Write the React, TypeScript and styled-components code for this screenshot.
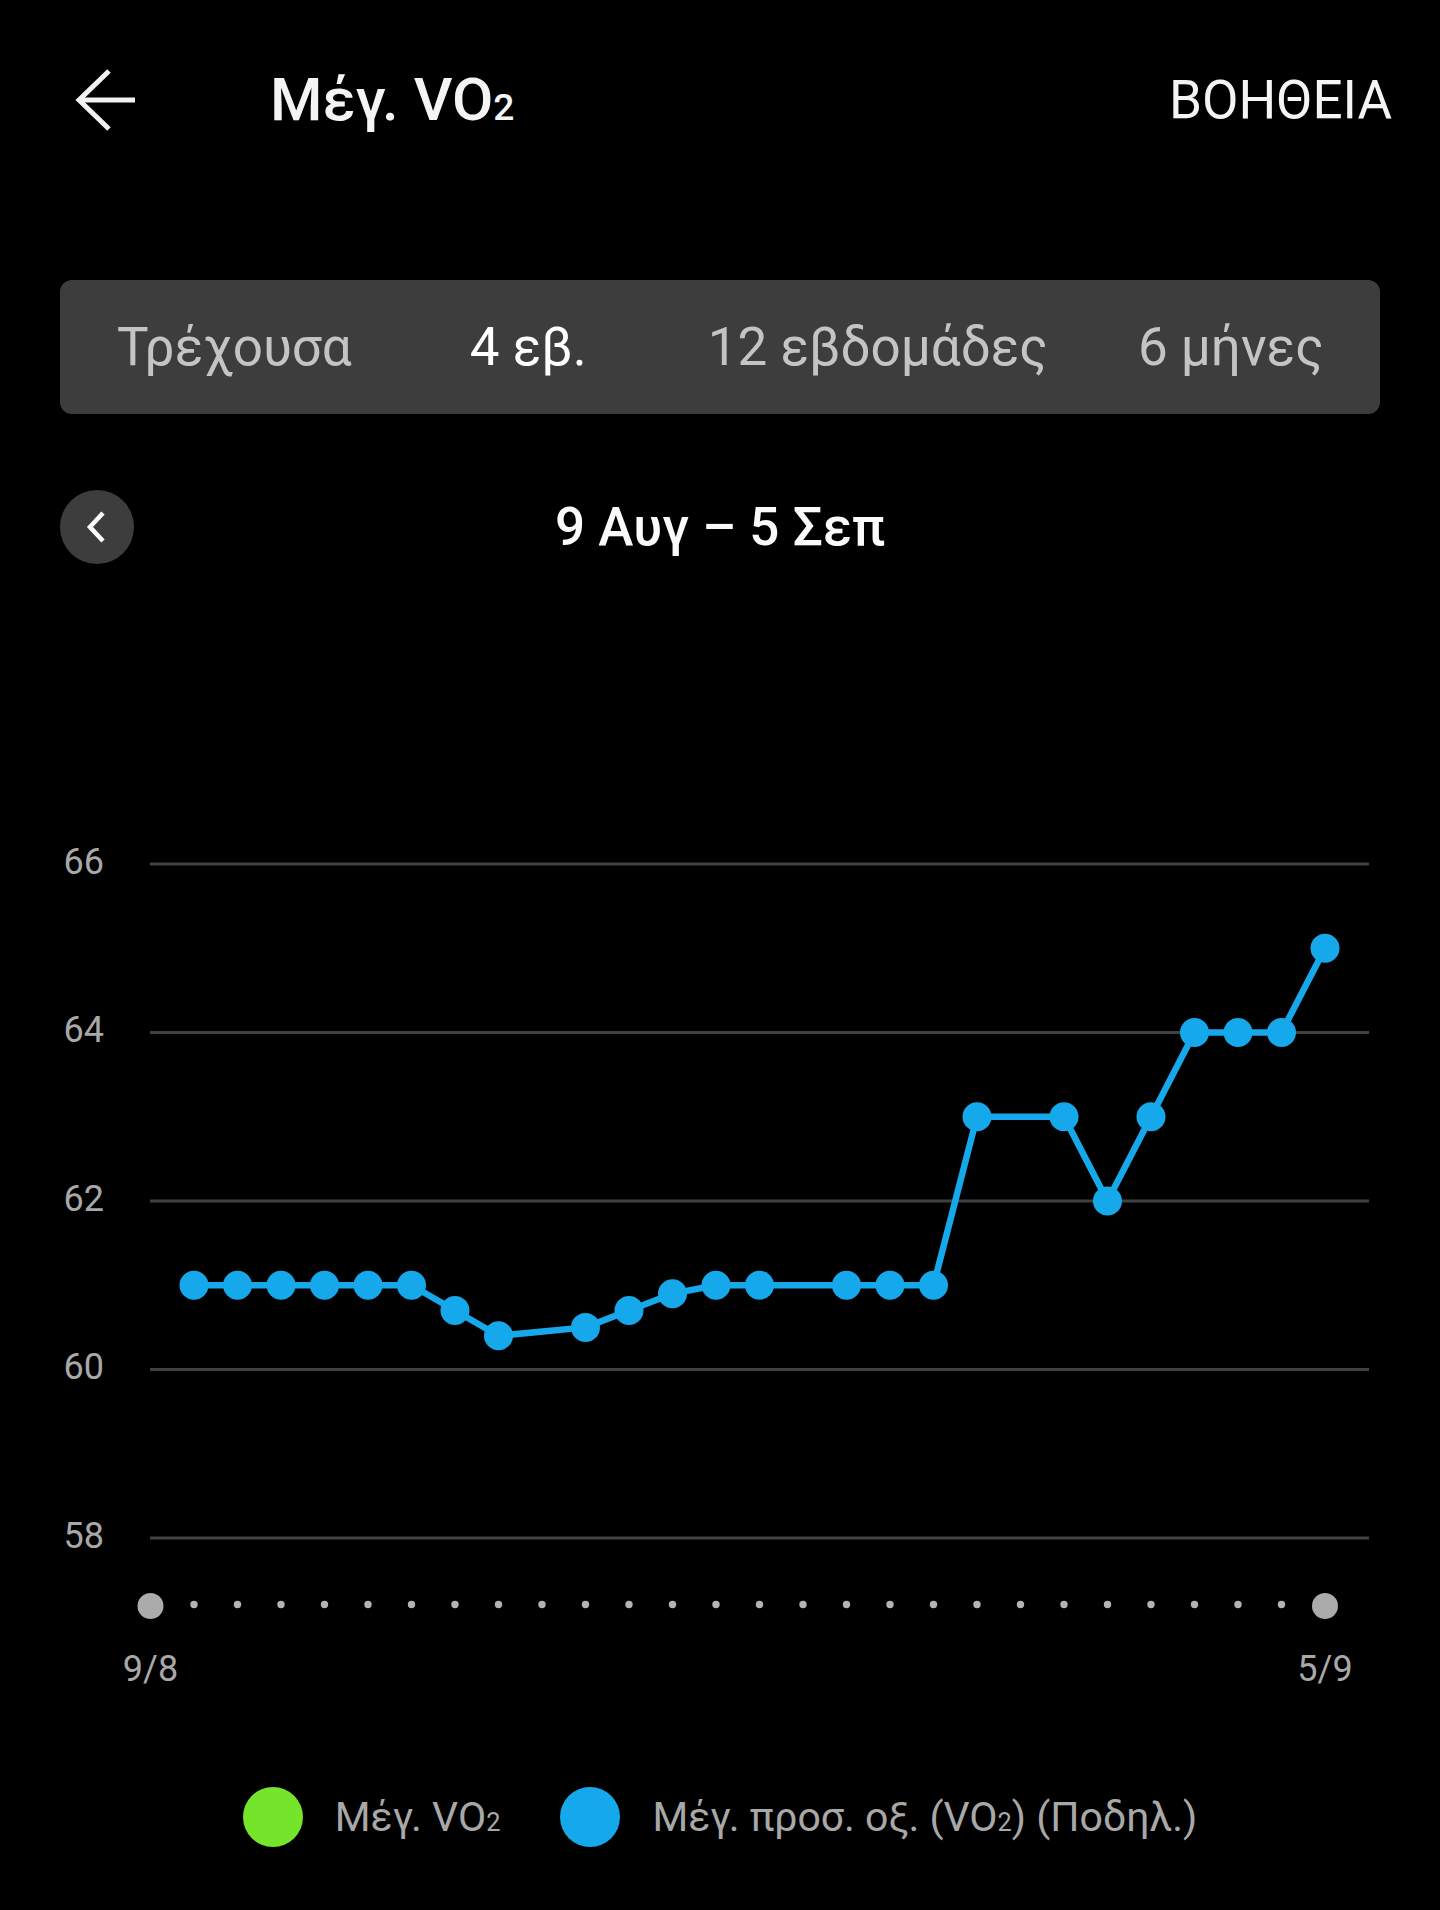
import React from 'react';
import styled, { createGlobalStyle } from 'styled-components';

const GlobalStyle = createGlobalStyle`
  html, body {
    margin: 0;
    padding: 0;
    background: #000;
  }
  body {
    font-family: Roboto, "Noto Sans", "Liberation Sans", sans-serif;
    -webkit-font-smoothing: antialiased;
  }
`;

// offset = space before the label inside the bar
const PERIODS = [
  { label: 'Τρέχουσα', active: false, offset: 57 },
  { label: '4 εβ.', active: true, offset: 118 },
  { label: '12 εβδομάδες', active: false, offset: 121 },
  { label: '6 μήνες', active: false, offset: 90 },
];

// one entry per day starting 9/8, null = no reading that day
const SERIES: (number | null)[] = [
  null, 61, 61, 61, 61, 61, 61, 60.7, 60.4, null, 60.5, 60.7, 60.9, 61,
  61, null, 61, 61, 61, 63, null, 63, 62, 63, 64, 64, 64, 65,
];

const GRID_VALUES = [66, 64, 62, 60, 58];

const X0 = 150.5;
const STEP = 43.5;
const Y_BASE = 569.5; // y of value 60
const UNIT = 84.25; // px per 1.0 of VO2
const BLUE = '#15a9eb';

const xAt = (i: number) => X0 + STEP * i;
const yAt = (v: number) => Y_BASE - (v - 60) * UNIT;

function BackArrow() {
  return (
    <svg width="65" height="64" viewBox="-3 -3 65 64" fill="none">
      <path d="M59 29H3" stroke="#f2f2f2" strokeWidth="5" />
      <path d="M33 0L3 29L33 58" stroke="#f2f2f2" strokeWidth="5" strokeLinejoin="miter" />
    </svg>
  );
}

function VO2() {
  return (
    <>
      VO<Sub>2</Sub>
    </>
  );
}

function Chart() {
  const points = SERIES
    .map((v, i) => (v === null ? null : { x: xAt(i), y: yAt(v) }))
    .filter((p): p is { x: number; y: number } => p !== null);
  const linePath = points.map((p, i) => `${i === 0 ? 'M' : 'L'}${p.x} ${p.y}`).join(' ');

  return (
    <ChartSvg width="1440" height="900" viewBox="0 0 1440 900">
      {GRID_VALUES.map((v) => (
        <g key={v}>
          <line x1="150" x2="1369" y1={yAt(v)} y2={yAt(v)} stroke="#414141" strokeWidth="3" />
          <AxisText x="104" y={yAt(v) + 9.5} textAnchor="end">{v}</AxisText>
        </g>
      ))}

      <path d={linePath} fill="none" stroke={BLUE} strokeWidth="6.5" strokeLinejoin="round" />
      {points.map((p, i) => (
        <circle key={i} cx={p.x} cy={p.y} r="14.5" fill={BLUE} />
      ))}

      {SERIES.map((_, i) =>
        i === 0 || i === SERIES.length - 1 ? (
          <circle key={i} cx={xAt(i)} cy="806" r="13" fill="#ababab" />
        ) : (
          <circle key={i} cx={xAt(i)} cy="804.5" r="3.7" fill="#b4b4b4" />
        )
      )}
      <AxisText x={xAt(0)} y="881" textAnchor="middle">9/8</AxisText>
      <AxisText x={xAt(SERIES.length - 1)} y="881" textAnchor="middle">5/9</AxisText>
    </ChartSvg>
  );
}

export default function App() {
  return (
    <Page>
      <GlobalStyle />
      <Header>
        <BackButton aria-label="back">
          <BackArrow />
        </BackButton>
        <Title>Μέγ. <VO2 /></Title>
        <HelpLink>ΒΟΗΘΕΙΑ</HelpLink>
      </Header>

      <Segmented>
        {PERIODS.map((p) => (
          <Segment key={p.label} $active={p.active} $offset={p.offset}>{p.label}</Segment>
        ))}
      </Segmented>

      <DateRow>
        <RoundButton aria-label="previous">
          <svg width="24" height="34" viewBox="0 0 24 34" fill="none">
            <path d="M18 3L5 17L18 31" stroke="#fff" strokeWidth="4.5" />
          </svg>
        </RoundButton>
        <DateTitle>9 Αυγ – 5 Σεπ</DateTitle>
        <span />
      </DateRow>

      <Chart />

      <Legend>
        <LegendItem>
          <Swatch $color="#74e52b" />
          <LegendText>Μέγ. <VO2 /></LegendText>
        </LegendItem>
        <LegendItem>
          <Swatch $color={BLUE} />
          <LegendText>Μέγ. προσ. οξ. (<VO2 />) (Ποδηλ.)</LegendText>
        </LegendItem>
      </Legend>
    </Page>
  );
}

const Page = styled.div`
display: flex;
flex-direction: column;
width: 1440px;
min-height: 1910px;
background: #000;
color: #fff;
`

const Header = styled.div`
display: flex;
align-items: center;
height: 200px;
padding: 0 48px 0 73px;
box-sizing: border-box;
`

const BackButton = styled.div`
display: flex;
width: 65px;
height: 64px;
cursor: pointer;
`

const Title = styled.div`
margin-left: 132px;
font-size: 60px;
font-weight: 500;
line-height: 1;
color: #f4f4f4;
`

const Sub = styled.span`
font-size: 0.62em;
vertical-align: baseline;
`

const HelpLink = styled.div`
margin-left: auto;
font-size: 53px;
font-weight: 400;
line-height: 1;
color: #f4f4f4;
`

const Segmented = styled.div`
display: flex;
align-items: center;
height: 134px;
margin: 80px 60px 0;
background: #3d3d3d;
border-radius: 12px;
`

const Segment = styled.div<{ $active: boolean; $offset: number }>`
margin-left: ${(p) => p.$offset}px;
font-size: 53px;
line-height: 1;
color: ${(p) => (p.$active ? '#ffffff' : '#c4c4c4')};
cursor: pointer;
`

const DateRow = styled.div`
display: grid;
grid-template-columns: 74px 1fr 74px;
align-items: center;
margin: 76px 60px 0;
`

const RoundButton = styled.div`
display: flex;
align-items: center;
justify-content: center;
width: 74px;
height: 74px;
border-radius: 50%;
background: #3d3d3d;
cursor: pointer;
`

const DateTitle = styled.div`
text-align: center;
font-size: 53px;
font-weight: 500;
line-height: 1;
color: #fafafa;
`

const ChartSvg = styled.svg`
display: block;
margin-top: 236px;
`

const AxisText = styled.text`
font-family: Roboto, "Noto Sans", sans-serif;
font-size: 36px;
fill: #a8a8a8;
`

const Legend = styled.div`
display: flex;
justify-content: center;
gap: 60px;
margin-top: 87px;
`

const LegendItem = styled.div`
display: flex;
align-items: center;
gap: 32px;
`

const Swatch = styled.span<{ $color: string }>`
width: 60px;
height: 60px;
border-radius: 50%;
background: ${(p) => p.$color};
`

const LegendText = styled.span`
font-size: 41px;
line-height: 1;
color: #a8a8a8;
`
